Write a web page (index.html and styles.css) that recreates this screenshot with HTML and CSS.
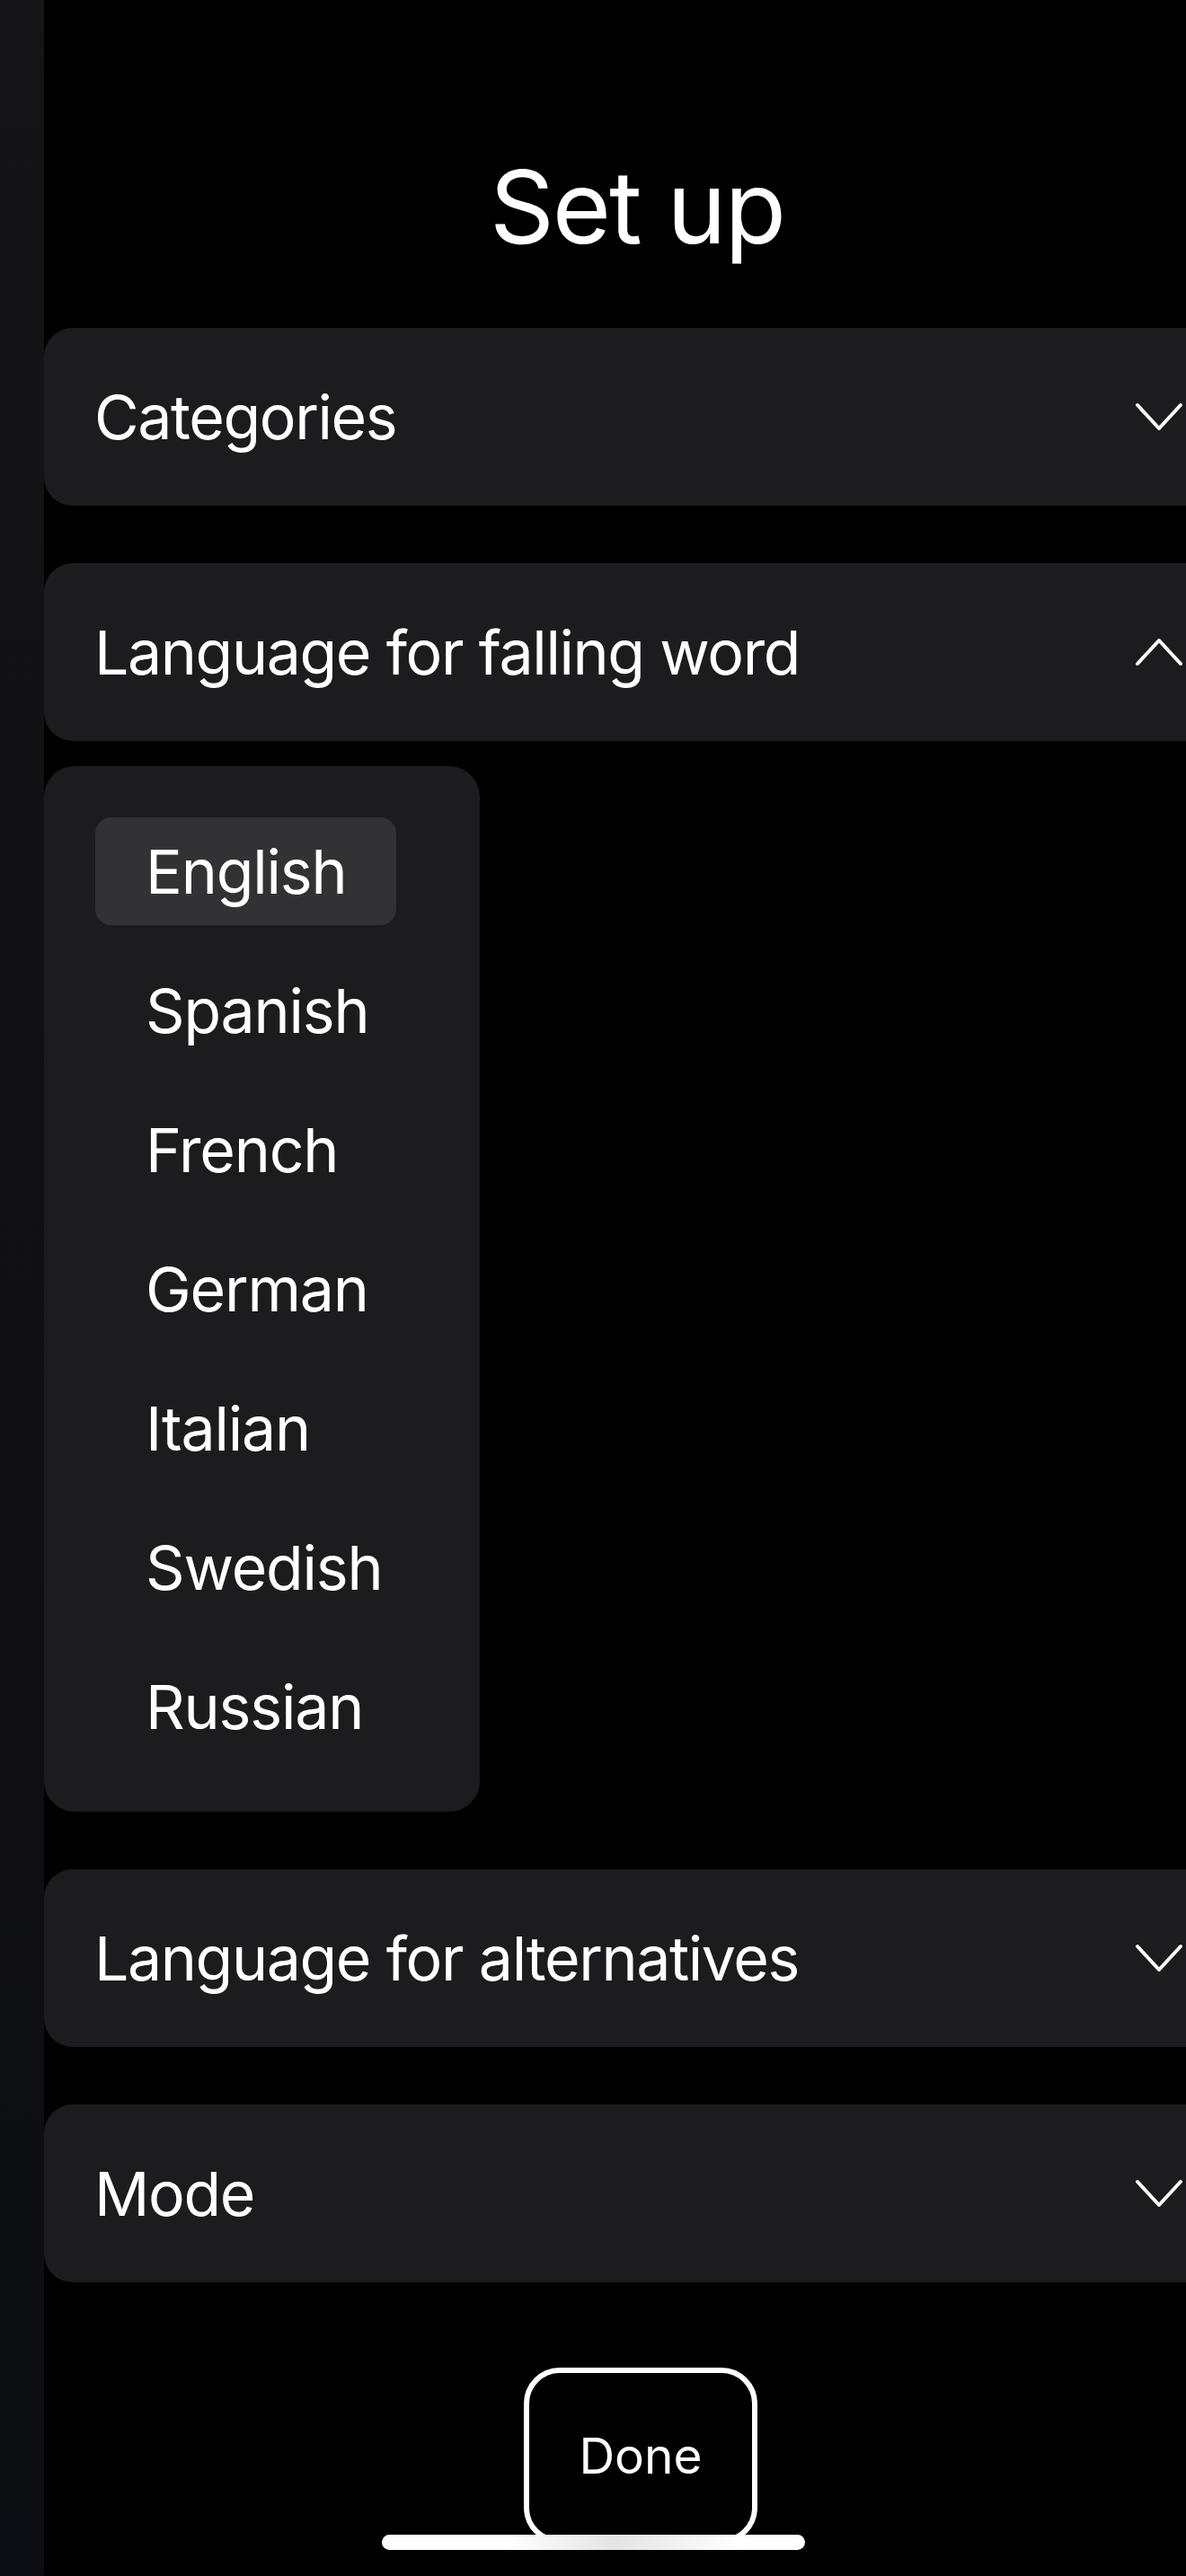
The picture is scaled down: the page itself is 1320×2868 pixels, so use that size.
FILE: index.html
```html
<!DOCTYPE html>
<html lang="en">
<head>
    <meta charset="UTF-8">
    <meta name="viewport" content="width=device-width, initial-scale=1.0">
    <title>Set up</title>
    <link rel="stylesheet" href="styles.css">
</head>
<body>
    <div class="screen">
        <div class="edge"></div>
        <div class="sheet">
            <h1 class="title">Set up</h1>

            <div class="card">
                <span>Categories</span>
                <svg class="chev" viewBox="0 0 54 32"><polyline points="3,3 27,29 51,3"/></svg>
            </div>

            <div class="card">
                <span>Language for falling word</span>
                <svg class="chev" viewBox="0 0 54 32"><polyline points="3,29 27,3 51,29"/></svg>
            </div>

            <div class="menu">
                <div class="option selected">English</div>
                <div class="option">Spanish</div>
                <div class="option">French</div>
                <div class="option">German</div>
                <div class="option">Italian</div>
                <div class="option">Swedish</div>
                <div class="option">Russian</div>
            </div>

            <div class="card">
                <span>Language for alternatives</span>
                <svg class="chev" viewBox="0 0 54 32"><polyline points="3,3 27,29 51,3"/></svg>
            </div>

            <div class="card">
                <span>Mode</span>
                <svg class="chev" viewBox="0 0 54 32"><polyline points="3,3 27,29 51,3"/></svg>
            </div>

            <button class="done">Done</button>
        </div>
        <div class="home-bar"></div>
    </div>
</body>
</html>
```

FILE: styles.css
```css
html, body{
    margin: 0;
    background: #000;
    overflow: hidden;
}
body{
    font-family: Inter, "Noto Sans", sans-serif;
    color: #fff;
}
.screen{
    position: relative;
    display: flex;
    width: 1320px;
    height: 2868px;
}
.edge{
    flex: 0 0 49px;
    background: linear-gradient(180deg, #151518 0%, #111114 40%, #0c0d12 100%);
}
.sheet{
    flex: 0 0 1320px;
    display: flex;
    flex-direction: column;
    padding-top: 174px;
}
.title{
    margin: 0 0 79px 0;
    font-size: 112px;
    line-height: 1;
    font-weight: 400;
    text-align: center;
    letter-spacing: -2px;
}
.card{
    height: 198px;
    box-sizing: border-box;
    padding: 0 52px 0 56px;
    display: flex;
    align-items: center;
    justify-content: space-between;
    background: #1c1c1e;
    border-radius: 32px;
    font-size: 68px;
    line-height: 1;
    letter-spacing: -1.4px;
    margin-bottom: 64px;
}
.card:nth-of-type(2){
    margin-bottom: 28px;
}
.chev{
    width: 54px;
    height: 32px;
    fill: none;
    stroke: #fff;
    stroke-width: 4;
    stroke-linecap: round;
    stroke-linejoin: round;
}
.menu{
    align-self: flex-start;
    display: flex;
    flex-direction: column;
    gap: 35px;
    padding: 57px 93px 57px 57px;
    background: #1c1c1e;
    border-radius: 34px;
    margin-bottom: 64px;
}
.option{
    width: 335px;
    height: 120px;
    box-sizing: border-box;
    padding-left: 56px;
    display: flex;
    align-items: center;
    font-size: 68px;
    line-height: 1;
    letter-spacing: -1.2px;
    border-radius: 18px;
}
.option.selected{
    background: #323234;
}
.done{
    align-self: center;
    margin-top: 31px;
    margin-left: 8px;
    width: 260px;
    height: 196px;
    background: #000;
    color: #fff;
    border: 6px solid #fff;
    border-radius: 40px;
    font-family: Inter, "Noto Sans", sans-serif;
    font-size: 55px;
    line-height: 1;
    padding: 0;
}
.home-bar{
    position: absolute;
    left: 425px;
    top: 2822px;
    width: 471px;
    height: 17px;
    border-radius: 9px;
    background: linear-gradient(90deg, #fff 0%, #fff 30%, #e4e4e4 55%, #fff 85%, #fff 100%);
}
```
